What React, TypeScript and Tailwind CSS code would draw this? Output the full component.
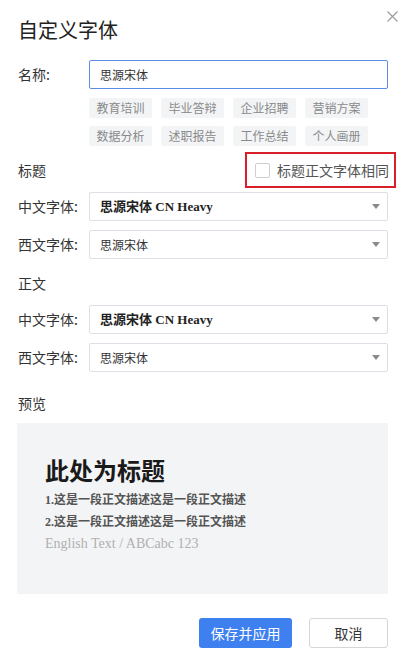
import React from "react";

const sans = { fontFamily: '"Noto Sans CJK SC", "Noto Sans", sans-serif' };
const serif = { fontFamily: '"Liberation Serif", "Noto Sans CJK SC", serif' };

function Caret() {
  return (
    <svg width="8" height="5" viewBox="0 0 8 5" className="shrink-0">
      <path d="M0 0 L8 0 L4 5 Z" fill="#8a8a8a" />
    </svg>
  );
}

function Select({ text, bold }: { text: string; bold?: boolean }) {
  return (
    <div className="flex h-[29px] flex-1 items-center justify-between rounded-[2px] border border-[#dcdfe6] bg-white pl-[10px] pr-[7px]">
      {bold ? (
        <span className="text-[13px] font-bold text-[#222]" style={serif}>
          {text}
        </span>
      ) : (
        <span className="text-[12px] text-[#333]" style={sans}>
          {text}
        </span>
      )}
      <Caret />
    </div>
  );
}

function Row({ label, children }: { label: string; children: React.ReactNode }) {
  return (
    <div className="flex items-center">
      <div className="w-[71px] shrink-0 text-[14px] text-[#333]">{label}</div>
      {children}
    </div>
  );
}

const tags = ["教育培训", "毕业答辩", "企业招聘", "营销方案", "数据分析", "述职报告", "工作总结", "个人画册"];

export default function App() {
  return (
    <div className="relative h-[664px] w-[411px] bg-white pl-[18px] pr-[23px] text-[#333]" style={sans}>
      <button className="absolute right-[13px] top-[11px] h-[11px] w-[11px]">
        <svg width="11" height="11" viewBox="0 0 11 11">
          <path d="M0.5 0.5 L10.5 10.5 M10.5 0.5 L0.5 10.5" stroke="#9a9a9a" strokeWidth="1.1" />
        </svg>
      </button>
      <div className="pt-[15px] text-[20px] leading-[30px] text-[#222]">自定义字体</div>

      <div className="mt-[15px]">
        <Row label="名称:">
          <div className="flex h-[29px] flex-1 items-center rounded-[2px] border border-[#5b8de8] pl-[10px] text-[12px] text-[#333]">
            思源宋体
          </div>
        </Row>
      </div>

      <div className="ml-[71px] mt-[9px] grid grid-cols-[repeat(4,63px)] gap-x-[9px] gap-y-[8px]">
        {tags.map((t) => (
          <div
            key={t}
            className="flex h-[20px] items-center justify-center rounded-[2px] bg-[#f2f4f6] text-[12px] text-[#8a8a8a]"
          >
            {t}
          </div>
        ))}
      </div>

      <div className="mt-[6px] flex h-[36px] items-center justify-between">
        <div className="text-[14px] text-[#333]">标题</div>
        <div className="-mr-[8px] flex h-[36px] w-[151px] items-center gap-[7px] border-2 border-[#d9202a] pl-[8px]">
          <div className="h-[15px] w-[15px] rounded-[2px] border border-[#cfcfcf] bg-white" />
          <span className="text-[14px] text-[#555]">标题正文字体相同</span>
        </div>
      </div>

      <div className="mt-[4px] flex flex-col gap-[9px]">
        <Row label="中文字体:">
          <Select text="思源宋体 CN Heavy" bold />
        </Row>
        <Row label="西文字体:">
          <Select text="思源宋体" />
        </Row>
      </div>

      <div className="mt-[14px] text-[14px] leading-[20px] text-[#333]">正文</div>

      <div className="mt-[12px] flex flex-col gap-[9px]">
        <Row label="中文字体:">
          <Select text="思源宋体 CN Heavy" bold />
        </Row>
        <Row label="西文字体:">
          <Select text="思源宋体" />
        </Row>
      </div>

      <div className="mt-[21px] text-[14px] leading-[20px] text-[#333]">预览</div>

      <div className="-ml-px mt-[10px] h-[171px] bg-[#f3f4f6] pl-[28px] pt-[33px]">
        <div className="text-[24px] font-bold leading-[32px] text-[#1a1a1a]" style={serif}>
          此处为标题
        </div>
        <div className="mt-[1px] text-[12px] font-bold leading-[22px] text-[#555]" style={serif}>
          1.这是一段正文描述这是一段正文描述
        </div>
        <div className="text-[12px] font-bold leading-[22px] text-[#555]" style={serif}>
          2.这是一段正文描述这是一段正文描述
        </div>
        <div className="text-[14px] leading-[22px] text-[#b0b0b0]" style={serif}>
          English Text / ABCabc 123
        </div>
      </div>

      <div className="mt-[24px] flex justify-end gap-[17px]">
        <button className="h-[30px] w-[93px] rounded-[3px] bg-[#3f80f0] text-[14px] text-white">保存并应用</button>
        <button className="h-[30px] w-[79px] rounded-[3px] border border-[#d6d6d6] bg-white text-[14px] text-[#333]">
          取消
        </button>
      </div>
    </div>
  );
}
